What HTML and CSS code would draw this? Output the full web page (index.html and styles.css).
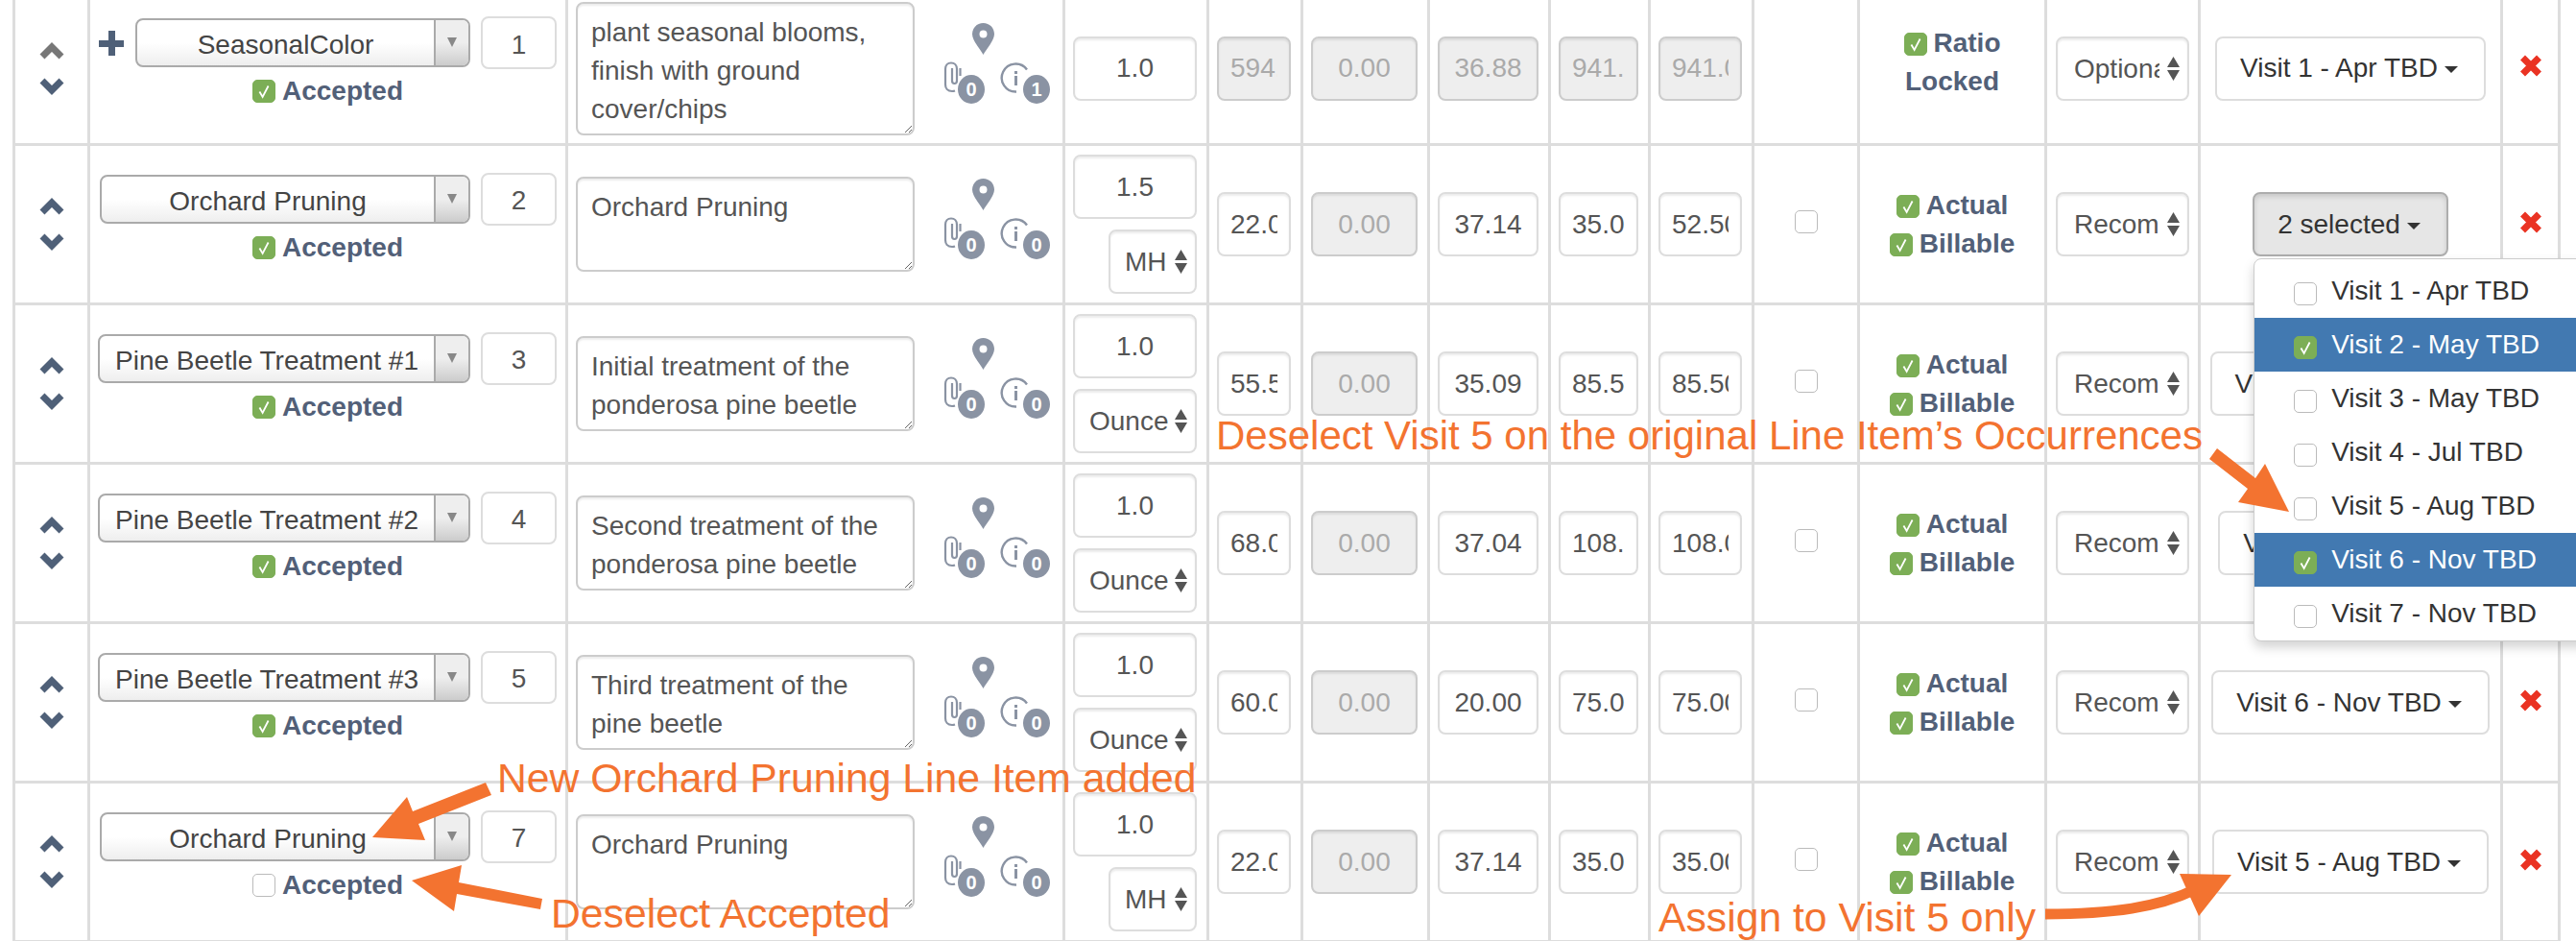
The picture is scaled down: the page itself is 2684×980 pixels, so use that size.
FILE: index.html
```html
<!DOCTYPE html>
<html lang="en">
<head>
    <meta charset="UTF-8">
    <meta name="viewport" content="width=device-width, initial-scale=1.0">
    <title>Line Items</title>
    <link rel="stylesheet" href="styles.css">
</head>
<body>
    <svg class="sprite" width="0" height="0">
        <symbol id="chev-up" viewBox="0 0 26 19"><path d="M3 16 13 6l10 10" fill="none" stroke="currentColor" stroke-width="7"/></symbol>
        <symbol id="chev-down" viewBox="0 0 26 19"><path d="M3 3l10 10L23 3" fill="none" stroke="currentColor" stroke-width="7"/></symbol>
        <symbol id="tick" viewBox="0 0 24 24"><path d="M7 12.500l3.500 6L17 6" fill="none" stroke="#fff" stroke-width="2"/></symbol>
        <symbol id="pin" viewBox="0 0 23 33"><path fill-rule="evenodd" d="M11.500 0C5 0 0 5 0 11.500C0 18 8 27 11.500 33 15 27 23 18 23 11.500 23 5 18 0 11.500 0zm0 7.500a4 4 0 1 1 0 8 4 4 0 0 1 0-8z"/></symbol>
        <symbol id="clip" viewBox="0 0 20 36"><path d="M13 31.500a8 8 0 0 1-3 .5c-4.500 0-7-3-7-7V9c0-4 2.500-6.500 6-6.500s6 2.500 6 6.500v12c0 2-1 3-2.500 3S10 23 10 21V8M18.500 8v8" fill="none" stroke="currentColor" stroke-width="2.200"/></symbol>
        <symbol id="info" viewBox="0 0 32 34"><path d="M28 8.500A14.500 14.500 0 1 0 17 31.500" fill="none" stroke="currentColor" stroke-width="2.400"/><path d="M15 10h3v3h-3zM15 15h3v10h-3z" fill="currentColor"/></symbol>
        <symbol id="remove" viewBox="0 0 24 23"><path d="M3.500 3l17 17M20.500 3l-17 17" fill="none" stroke="currentColor" stroke-width="7"/></symbol>
    </svg>

    <table class="items">
        <colgroup>
            <col class="c-move"><col class="c-name"><col class="c-desc"><col class="c-qty"><col class="c-a">
            <col class="c-b"><col class="c-c"><col class="c-d"><col class="c-e"><col class="c-flag">
            <col class="c-status"><col class="c-kind"><col class="c-visit"><col class="c-del">
        </colgroup>
        <tbody>
            <tr class="first">
                <td class="move"><svg class="chev off"><use href="#chev-up"/></svg><svg class="chev"><use href="#chev-down"/></svg></td>
                <td class="name">
                    <div class="name-row">
                        <svg class="plus" viewBox="0 0 26 26"><path d="M10 0h7v10h9v7h-9v9h-7v-9H0v-7h10z"/></svg>
                        <div class="picker short"><span class="picker-text">SeasonalColor</span><span class="picker-arrow"></span></div>
                        <input class="order" value="1">
                    </div>
                    <div class="accepted"><span class="check on"><svg><use href="#tick"/></svg></span>Accepted</div>
                </td>
                <td>
                    <div class="desc">
                        <textarea class="tall">plant seasonal blooms, finish with ground cover/chips</textarea>
                        <div class="icons">
                            <svg class="pin"><use href="#pin"/></svg>
                            <div class="icon-row">
                                <span class="icon-wrap clip-wrap"><svg class="clip"><use href="#clip"/></svg><span class="count">0</span></span>
                                <span class="icon-wrap info-wrap"><svg class="info"><use href="#info"/></svg><span class="count">1</span></span>
                            </div>
                        </div>
                    </div>
                </td>
                <td class="num"><input value="1.0"></td>
                <td class="num"><input value="594.00" disabled></td>
                <td class="num"><input value="0.00" disabled></td>
                <td class="num"><input value="36.88" disabled></td>
                <td class="num"><input value="941.50" disabled></td>
                <td class="num"><input value="941.00" disabled></td>
                <td class="flag"></td>
                <td class="status"><div><span class="check on"><svg><use href="#tick"/></svg></span>Ratio</div><div>Locked</div></td>
                <td class="kind"><select><option>Optional</option></select></td>
                <td class="visit"><button class="visit-btn">Visit 1 - Apr TBD<span class="caret"></span></button></td>
                <td class="del"><svg class="remove"><use href="#remove"/></svg></td>
            </tr>
            <tr>
                <td class="move"><svg class="chev"><use href="#chev-up"/></svg><svg class="chev"><use href="#chev-down"/></svg></td>
                <td class="name">
                    <div class="name-row">
                        <div class="picker"><span class="picker-text">Orchard Pruning</span><span class="picker-arrow"></span></div>
                        <input class="order" value="2">
                    </div>
                    <div class="accepted"><span class="check on"><svg><use href="#tick"/></svg></span>Accepted</div>
                </td>
                <td>
                    <div class="desc">
                        <textarea>Orchard Pruning</textarea>
                        <div class="icons">
                            <svg class="pin"><use href="#pin"/></svg>
                            <div class="icon-row">
                                <span class="icon-wrap clip-wrap"><svg class="clip"><use href="#clip"/></svg><span class="count">0</span></span>
                                <span class="icon-wrap info-wrap"><svg class="info"><use href="#info"/></svg><span class="count">0</span></span>
                            </div>
                        </div>
                    </div>
                </td>
                <td class="num qty"><input value="1.5"><select class="unit"><option>MH</option></select></td>
                <td class="num"><input value="22.00"></td>
                <td class="num"><input value="0.00" disabled></td>
                <td class="num"><input value="37.14"></td>
                <td class="num"><input value="35.00"></td>
                <td class="num"><input value="52.50"></td>
                <td class="flag"><span class="check"></span></td>
                <td class="status"><div><span class="check on"><svg><use href="#tick"/></svg></span>Actual</div><div><span class="check on"><svg><use href="#tick"/></svg></span>Billable</div></td>
                <td class="kind"><select><option>Recommended</option></select></td>
                <td class="visit">
                    <div class="visit-open">
                        <button class="visit-btn active">2 selected<span class="caret"></span></button>
                        <ul class="visit-menu">
                            <li><span class="check"></span>Visit 1 - Apr TBD</li>
                            <li class="picked"><span class="check on"><svg><use href="#tick"/></svg></span>Visit 2 - May TBD</li>
                            <li><span class="check"></span>Visit 3 - May TBD</li>
                            <li><span class="check"></span>Visit 4 - Jul TBD</li>
                            <li><span class="check"></span>Visit 5 - Aug TBD</li>
                            <li class="picked"><span class="check on"><svg><use href="#tick"/></svg></span>Visit 6 - Nov TBD</li>
                            <li><span class="check"></span>Visit 7 - Nov TBD</li>
                        </ul>
                    </div>
                </td>
                <td class="del"><svg class="remove"><use href="#remove"/></svg></td>
            </tr>
            <tr>
                <td class="move"><svg class="chev"><use href="#chev-up"/></svg><svg class="chev"><use href="#chev-down"/></svg></td>
                <td class="name">
                    <div class="name-row">
                        <div class="picker wide"><span class="picker-text">Pine Beetle Treatment #1</span><span class="picker-arrow"></span></div>
                        <input class="order" value="3">
                    </div>
                    <div class="accepted"><span class="check on"><svg><use href="#tick"/></svg></span>Accepted</div>
                </td>
                <td>
                    <div class="desc">
                        <textarea>Initial treatment of the ponderosa pine beetle</textarea>
                        <div class="icons">
                            <svg class="pin"><use href="#pin"/></svg>
                            <div class="icon-row">
                                <span class="icon-wrap clip-wrap"><svg class="clip"><use href="#clip"/></svg><span class="count">0</span></span>
                                <span class="icon-wrap info-wrap"><svg class="info"><use href="#info"/></svg><span class="count">0</span></span>
                            </div>
                        </div>
                    </div>
                </td>
                <td class="num qty"><input value="1.0"><select class="unit ounce"><option>Ounce</option></select></td>
                <td class="num"><input value="55.50"></td>
                <td class="num"><input value="0.00" disabled></td>
                <td class="num"><input value="35.09"></td>
                <td class="num"><input value="85.50"></td>
                <td class="num"><input value="85.50"></td>
                <td class="flag"><span class="check"></span></td>
                <td class="status"><div><span class="check on"><svg><use href="#tick"/></svg></span>Actual</div><div><span class="check on"><svg><use href="#tick"/></svg></span>Billable</div></td>
                <td class="kind"><select><option>Recommended</option></select></td>
                <td class="visit"><button class="visit-btn">Visit 3 - May TBD<span class="caret"></span></button></td>
                <td class="del"><svg class="remove"><use href="#remove"/></svg></td>
            </tr>
            <tr>
                <td class="move"><svg class="chev"><use href="#chev-up"/></svg><svg class="chev"><use href="#chev-down"/></svg></td>
                <td class="name">
                    <div class="name-row">
                        <div class="picker wide"><span class="picker-text">Pine Beetle Treatment #2</span><span class="picker-arrow"></span></div>
                        <input class="order" value="4">
                    </div>
                    <div class="accepted"><span class="check on"><svg><use href="#tick"/></svg></span>Accepted</div>
                </td>
                <td>
                    <div class="desc">
                        <textarea>Second treatment of the ponderosa pine beetle</textarea>
                        <div class="icons">
                            <svg class="pin"><use href="#pin"/></svg>
                            <div class="icon-row">
                                <span class="icon-wrap clip-wrap"><svg class="clip"><use href="#clip"/></svg><span class="count">0</span></span>
                                <span class="icon-wrap info-wrap"><svg class="info"><use href="#info"/></svg><span class="count">0</span></span>
                            </div>
                        </div>
                    </div>
                </td>
                <td class="num qty"><input value="1.0"><select class="unit ounce"><option>Ounce</option></select></td>
                <td class="num"><input value="68.00"></td>
                <td class="num"><input value="0.00" disabled></td>
                <td class="num"><input value="37.04"></td>
                <td class="num"><input value="108.00"></td>
                <td class="num"><input value="108.00"></td>
                <td class="flag"><span class="check"></span></td>
                <td class="status"><div><span class="check on"><svg><use href="#tick"/></svg></span>Actual</div><div><span class="check on"><svg><use href="#tick"/></svg></span>Billable</div></td>
                <td class="kind"><select><option>Recommended</option></select></td>
                <td class="visit"><button class="visit-btn">Visit 4 - Jul TBD<span class="caret"></span></button></td>
                <td class="del"><svg class="remove"><use href="#remove"/></svg></td>
            </tr>
            <tr>
                <td class="move"><svg class="chev"><use href="#chev-up"/></svg><svg class="chev"><use href="#chev-down"/></svg></td>
                <td class="name">
                    <div class="name-row">
                        <div class="picker wide"><span class="picker-text">Pine Beetle Treatment #3</span><span class="picker-arrow"></span></div>
                        <input class="order" value="5">
                    </div>
                    <div class="accepted"><span class="check on"><svg><use href="#tick"/></svg></span>Accepted</div>
                </td>
                <td>
                    <div class="desc">
                        <textarea>Third treatment of the pine beetle</textarea>
                        <div class="icons">
                            <svg class="pin"><use href="#pin"/></svg>
                            <div class="icon-row">
                                <span class="icon-wrap clip-wrap"><svg class="clip"><use href="#clip"/></svg><span class="count">0</span></span>
                                <span class="icon-wrap info-wrap"><svg class="info"><use href="#info"/></svg><span class="count">0</span></span>
                            </div>
                        </div>
                    </div>
                </td>
                <td class="num qty"><input value="1.0"><select class="unit ounce"><option>Ounce</option></select></td>
                <td class="num"><input value="60.00"></td>
                <td class="num"><input value="0.00" disabled></td>
                <td class="num"><input value="20.00"></td>
                <td class="num"><input value="75.00"></td>
                <td class="num"><input value="75.00"></td>
                <td class="flag"><span class="check"></span></td>
                <td class="status"><div><span class="check on"><svg><use href="#tick"/></svg></span>Actual</div><div><span class="check on"><svg><use href="#tick"/></svg></span>Billable</div></td>
                <td class="kind"><select><option>Recommended</option></select></td>
                <td class="visit"><button class="visit-btn">Visit 6 - Nov TBD<span class="caret"></span></button></td>
                <td class="del"><svg class="remove"><use href="#remove"/></svg></td>
            </tr>
            <tr>
                <td class="move"><svg class="chev"><use href="#chev-up"/></svg><svg class="chev"><use href="#chev-down"/></svg></td>
                <td class="name">
                    <div class="name-row">
                        <div class="picker"><span class="picker-text">Orchard Pruning</span><span class="picker-arrow"></span></div>
                        <input class="order" value="7">
                    </div>
                    <div class="accepted"><span class="check"></span>Accepted</div>
                </td>
                <td>
                    <div class="desc">
                        <textarea>Orchard Pruning</textarea>
                        <div class="icons">
                            <svg class="pin"><use href="#pin"/></svg>
                            <div class="icon-row">
                                <span class="icon-wrap clip-wrap"><svg class="clip"><use href="#clip"/></svg><span class="count">0</span></span>
                                <span class="icon-wrap info-wrap"><svg class="info"><use href="#info"/></svg><span class="count">0</span></span>
                            </div>
                        </div>
                    </div>
                </td>
                <td class="num qty"><input value="1.0"><select class="unit"><option>MH</option></select></td>
                <td class="num"><input value="22.00"></td>
                <td class="num"><input value="0.00" disabled></td>
                <td class="num"><input value="37.14"></td>
                <td class="num"><input value="35.00"></td>
                <td class="num"><input value="35.00"></td>
                <td class="flag"><span class="check"></span></td>
                <td class="status"><div><span class="check on"><svg><use href="#tick"/></svg></span>Actual</div><div><span class="check on"><svg><use href="#tick"/></svg></span>Billable</div></td>
                <td class="kind"><select><option>Recommended</option></select></td>
                <td class="visit"><button class="visit-btn">Visit 5 - Aug TBD<span class="caret"></span></button></td>
                <td class="del"><svg class="remove"><use href="#remove"/></svg></td>
            </tr>
        </tbody>
    </table>

    <!-- callouts drawn on top of the table -->
    <svg class="arrows" viewBox="0 0 2684 980">
        <polygon points="2310,467 2350,498 2360,483 2385,533 2332,523 2342,509 2302,478"/>
        <polygon points="506,815 430,845 424,830 388,872 443,875 436,858 512,828"/>
        <polygon points="429,917 481,901 478,919 565,936 563,947 476,931 473,949"/>
        <path d="M2131 952C2200 952 2250 945 2288 926" fill="none" stroke="#f37330" stroke-width="11"/>
        <polygon points="2271,910 2325,911 2291,954"/>
    </svg>
    <span class="note note-visit">Deselect Visit 5 on the original Line Item’s Occurrences</span>
    <span class="note note-new">New Orchard Pruning Line Item added</span>
    <span class="note note-accept">Deselect Accepted</span>
    <span class="note note-assign">Assign to Visit 5 only</span>
</body>
</html>
```
FILE: styles.css
```css
html, body {
    margin: 0;
    height: 980px;
    overflow: hidden;
    background: #fff;
}
body {
    position: relative;
    font-family: "Liberation Sans", Arial, sans-serif;
    font-size: 28px;
    line-height: 40px;
    color: #555;
}
.sprite {
    position: absolute;
}
input, textarea, select, button {
    font-family: inherit;
    font-size: 28px;
    box-sizing: border-box;
}

/* table */
.items {
    table-layout: fixed;
    width: 2655px;
    margin: -10px 0 0 13px;
    border-collapse: collapse;
}
.items td {
    height: 166px;
    padding: 0 10px 0 8px;
    border: 3px solid #ddd;
    box-sizing: border-box;
    vertical-align: middle;
}
.items .first td {
    height: 159px;
}
.c-move { width: 78px; }
.c-name { width: 498px; }
.c-desc { width: 518px; }
.c-qty { width: 150px; }
.c-a { width: 98px; }
.c-b { width: 132px; }
.c-c { width: 126px; }
.c-d { width: 104px; }
.c-e { width: 108px; }
.c-flag { width: 110px; }
.c-status { width: 195px; }
.c-kind { width: 160px; }
.c-visit { width: 315px; }
.c-del { width: 60px; }

/* reorder */
.items .move {
    padding: 0;
    text-align: center;
}
.chev {
    display: block;
    width: 26px;
    height: 19px;
    margin: 0 auto;
    color: #4f6078;
}
.chev + .chev {
    margin-top: 19px;
}
.chev.off {
    color: #777;
}

/* name */
.items .name {
    padding: 0;
}
.name-row {
    display: flex;
    align-items: center;
    justify-content: flex-end;
    gap: 11px;
    padding-right: 9px;
}
.plus {
    width: 26px;
    height: 26px;
    margin-right: 1px;
    fill: #4f6078;
}
.picker {
    display: flex;
    width: 386px;
    height: 51px;
    box-sizing: border-box;
    border: 2px solid #aaa;
    border-radius: 8px;
    background: linear-gradient(#fff 50%, #eee);
    overflow: hidden;
    color: #444;
}
.picker.short {
    width: 349px;
}
.picker.wide {
    width: 388px;
}
.picker-text {
    flex: 1;
    padding-top: 6px;
    text-align: center;
    white-space: nowrap;
}
.picker-arrow {
    position: relative;
    width: 34px;
    border-left: 2px solid #aaa;
    background: linear-gradient(#eee 50%, #ccc);
}
.picker-arrow::after {
    content: "";
    position: absolute;
    top: 18px;
    left: 12px;
    border-top: 10px solid #888;
    border-left: 5.500px solid transparent;
    border-right: 5.500px solid transparent;
}
.order {
    width: 79px;
    height: 55px;
    padding: 4px 0 0;
    text-align: center;
    color: #555;
    background: #fff;
    border: 2px solid #ddd;
    border-radius: 8px;
}
.accepted {
    display: flex;
    align-items: center;
    justify-content: center;
    height: 40px;
    margin: 3px 0 10px;
    font-weight: bold;
    color: #526078;
}

/* checkboxes */
.check {
    display: inline-block;
    width: 24px;
    height: 24px;
    box-sizing: border-box;
    margin-right: 7px;
    border: 1px solid #bbb;
    border-radius: 5px;
    background: #fff;
    vertical-align: -3px;
}
.check.on {
    border-color: #7cae56;
    background: #7cae56;
}
.check svg {
    display: block;
    width: 22px;
    height: 22px;
}

/* description */
.desc {
    display: flex;
    align-items: center;
}
.desc textarea {
    width: 353px;
    height: 99px;
    padding: 10px 14px;
    line-height: 40px;
    color: #555;
    border: 2px solid #ccc;
    border-radius: 8px;
    overflow: hidden;
    box-shadow: inset 0 2px 2px rgba(0, 0, 0, .075);
}
.desc textarea.tall {
    height: 139px;
}
.icons {
    display: flex;
    flex-direction: column;
    margin: 0 0 10px 29px;
    color: #8a93a3;
}
.pin {
    display: block;
    width: 23px;
    height: 33px;
    margin-left: 31px;
    fill: #8a93a3;
}
.icon-row {
    display: flex;
    gap: 16px;
    margin-top: 6px;
}
.icon-wrap {
    position: relative;
    display: block;
    height: 46px;
}
.clip-wrap {
    width: 44px;
}
.info-wrap {
    width: 52px;
}
.clip {
    display: block;
    width: 20px;
    height: 36px;
}
.info {
    display: block;
    width: 32px;
    height: 34px;
    margin-top: 1px;
}
.count {
    position: absolute;
    right: 0;
    top: 15px;
    width: 28px;
    height: 30px;
    border-radius: 50%;
    background: #8a93a3;
    color: #fff;
    font-size: 20px;
    font-weight: bold;
    line-height: 30px;
    text-align: center;
}

/* number cells */
.num input {
    display: block;
    width: 100%;
    height: 67px;
    padding: 0 12px;
    text-align: center;
    color: #555;
    background: #fff;
    border: 2px solid #ddd;
    border-radius: 8px;
    box-shadow: inset 0 2px 2px rgba(0, 0, 0, .075);
}
.num input:disabled {
    color: #aaa;
    background: #eee;
    border-color: #ccc;
}
.qty .unit {
    display: block;
    margin: 11px 0 0 auto;
}
select {
    height: 67px;
    color: #555;
    appearance: none;
    border: 2px solid #ddd;
    border-radius: 8px;
    box-shadow: inset 0 2px 2px rgba(0, 0, 0, .075);
    background: #fff url("data:image/svg+xml,%3Csvg xmlns='http://www.w3.org/2000/svg' width='13' height='25'%3E%3Cpath fill='%23555' d='M6.500 0 13 11H0zM0 14h13l-6.500 11z'/%3E%3C/svg%3E") no-repeat right 8px center;
}
.unit {
    width: 92px;
    padding: 0 26px 0 15px;
}
.unit.ounce {
    width: 129px;
}
.kind select {
    display: block;
    width: 139px;
    padding: 0 29px 0 17px;
}
.items .kind {
    padding: 0 9px;
}

/* flag and status */
.items .flag {
    padding: 0 0 6px;
    text-align: center;
}
.flag .check {
    margin: 0;
}
.items .status {
    padding: 0;
    text-align: center;
    font-weight: bold;
    color: #526078;
}
.items .first .status {
    padding-bottom: 12px;
}
.status .check {
    vertical-align: -4px;
}

/* visit dropdown */
.items .visit {
    padding: 0;
    text-align: center;
}
.visit-btn {
    height: 67px;
    padding: 0 27px 0 24px;
    color: #333;
    background: #fff;
    border: 2px solid #ddd;
    border-radius: 8px;
    white-space: nowrap;
}
.visit-btn.active {
    background: #e6e6e6;
    border-color: #adadad;
    box-shadow: inset 0 3px 5px rgba(0, 0, 0, .125);
}
.caret {
    display: inline-block;
    margin-left: 7px;
    border-top: 7px solid #333;
    border-left: 7px solid transparent;
    border-right: 7px solid transparent;
    vertical-align: 4px;
}
.visit-open {
    position: relative;
    display: inline-block;
    vertical-align: middle;
}
.visit-menu {
    position: absolute;
    z-index: 2;
    top: 69px;
    left: 1px;
    width: 380px;
    margin: 0;
    padding: 5px 0 0;
    list-style: none;
    text-align: left;
    color: #333;
    background: #fff;
    border: 1px solid #ccc;
    border-radius: 8px;
    box-shadow: 0 6px 12px rgba(0, 0, 0, .175);
}
.visit-menu li {
    height: 56px;
    padding-left: 41px;
    line-height: 56px;
    white-space: nowrap;
}
.visit-menu .check {
    margin-right: 15px;
    vertical-align: -6px;
}
.visit-menu .picked {
    color: #fff;
    background: #4279b1;
}

/* delete */
.items .del {
    padding: 0 0 5px;
    text-align: center;
}
.remove {
    display: block;
    width: 24px;
    height: 23px;
    margin: 0 auto;
    color: #ea3323;
}

/* callouts */
.arrows {
    position: absolute;
    z-index: 3;
    left: 0;
    top: 0;
    width: 2684px;
    height: 980px;
    fill: #f37330;
}
.note {
    position: absolute;
    z-index: 3;
    font-size: 42.700px;
    line-height: 48px;
    color: #f37330;
    white-space: nowrap;
}
.note-visit { left: 1267px; top: 430px; font-size: 42px; }
.note-new { left: 518px; top: 786px; }
.note-accept { left: 574px; top: 927px; }
.note-assign { left: 1728px; top: 931px; }
```
